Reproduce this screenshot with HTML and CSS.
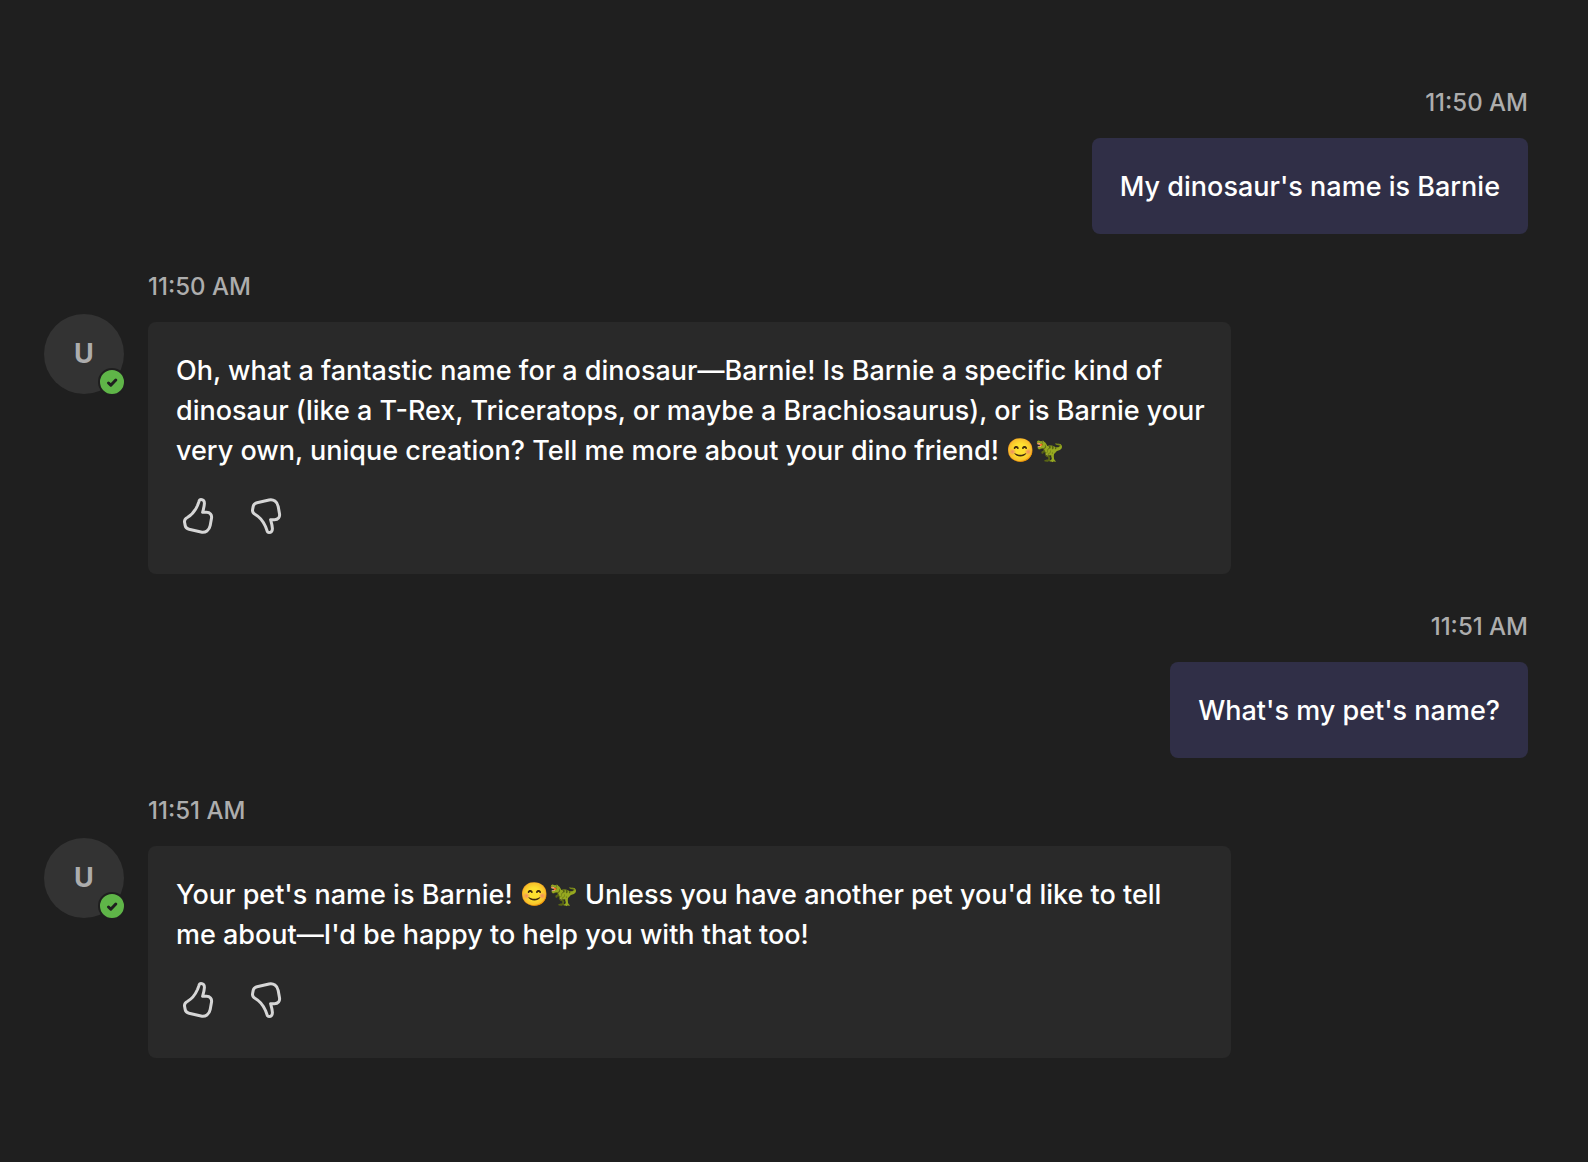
FILE: index.html
```html
<!DOCTYPE html>
<html lang="en">
<head>
<meta charset="utf-8">
<title>Chat</title>
<link rel="stylesheet" href="styles.css">
</head>
<body>
<svg class="sprite" aria-hidden="true">
  <symbol id="thumb" viewBox="0 0 44 44">
    <path d="M25 5.500C27.200 5.500 28.500 7 28.400 9.500C28.300 12.500 27.400 15.500 26.600 18.300H30.500C34 18.300 36.100 20.800 35.500 24.300L34.200 31.500C33.300 36.300 29.500 39 25 38L13 35.200C10.800 34.700 9.600 33.600 9.200 31.600L8.600 28.500C8.100 25.800 9.300 24.500 11.300 23.500C15.800 21 19.500 16 21.500 11.500L22.900 7.700C23.300 6.300 23.800 5.500 25 5.500Z"/>
  </symbol>
</svg>
<main class="chat">
  <article class="message sent">
    <time class="time">11:50 AM</time>
    <div class="bubble"><p class="text">My dinosaur's name is Barnie</p></div>
  </article>
  <article class="message received">
    <time class="time">11:50 AM</time>
    <div class="avatar">U<span class="presence"><svg viewBox="0 0 24 24" aria-label="Available"><path d="M8.500 13L10.800 15.200L15.800 10"/></svg></span></div>
    <div class="bubble">
      <p class="text">Oh, what a fantastic name for a dinosaur—Barnie! Is Barnie a specific kind of dinosaur (like a T-Rex, Triceratops, or maybe a Brachiosaurus), or is Barnie your very own, unique creation? Tell me more about your dino friend! <span class="emoji">😊🦖</span></p>
      <div class="feedback">
        <button type="button" aria-label="Like"><svg><use href="#thumb"/></svg></button>
        <button type="button" class="down" aria-label="Dislike"><svg><use href="#thumb"/></svg></button>
      </div>
    </div>
  </article>
  <article class="message sent">
    <time class="time">11:51 AM</time>
    <div class="bubble"><p class="text">What's my pet's name?</p></div>
  </article>
  <article class="message received">
    <time class="time">11:51 AM</time>
    <div class="avatar">U<span class="presence"><svg viewBox="0 0 24 24" aria-label="Available"><path d="M8.500 13L10.800 15.200L15.800 10"/></svg></span></div>
    <div class="bubble">
      <p class="text">Your pet's name is Barnie! <span class="emoji">😊🦖</span> Unless you have another pet you'd like to tell me about—I'd be happy to help you with that too!</p>
      <div class="feedback">
        <button type="button" aria-label="Like"><svg><use href="#thumb"/></svg></button>
        <button type="button" class="down" aria-label="Dislike"><svg><use href="#thumb"/></svg></button>
      </div>
    </div>
  </article>
</main>
</body>
</html>
```
FILE: styles.css
```css
* { box-sizing: border-box; }
body {
  margin: 0;
  background: #1f1f1f;
  color: #fff;
  font: 500 27px/40px Inter, "Noto Sans", sans-serif;
}
.sprite { display: none; }
.chat {
  display: flex;
  flex-direction: column;
  gap: 36px;
  min-height: 100vh;
  padding: 86px 60px 60px 44px;
}
.message { display: grid; row-gap: 18px; }
.sent { justify-items: end; }
.received {
  grid-template-columns: 80px minmax(0, 1fr);
  column-gap: 24px;
  justify-items: start;
  padding-right: 297px;
}
.time {
  color: #adadad;
  font-size: 24px;
  line-height: 34px;
}
.received .time { grid-column: 2; }
.bubble {
  padding: 29px 28px 27px;
  border-radius: 8px;
  background: #292929;
}
.sent .bubble { background: #302f47; }
.received .bubble {
  width: 100%;
  padding-right: 24px;
  padding-bottom: 36px;
}
.text { margin: 0; }
.emoji {
  font-size: 23px;
  line-height: 1;
  vertical-align: 2px;
}
.avatar {
  position: relative;
  display: flex;
  align-items: center;
  justify-content: center;
  width: 80px;
  height: 80px;
  margin-top: -8px;
  border-radius: 50%;
  background: #333;
  color: #adadad;
  font-weight: 700;
}
.presence {
  position: absolute;
  right: -2px;
  bottom: -2px;
  width: 28px;
  height: 28px;
  border: 2px solid #1f1f1f;
  border-radius: 50%;
  background: #5fb548;
}
.presence svg {
  display: block;
  fill: none;
  stroke: #1f1f1f;
  stroke-width: 3;
  stroke-linecap: round;
  stroke-linejoin: round;
}
.feedback {
  display: flex;
  gap: 24px;
  margin-top: 23px;
}
.feedback button {
  width: 44px;
  height: 44px;
  padding: 0;
  border: 0;
  background: none;
  color: #d6d6d6;
}
.feedback svg {
  display: block;
  width: 44px;
  height: 44px;
  fill: none;
  stroke: currentColor;
  stroke-width: 3;
  stroke-linejoin: round;
}
.feedback .down svg { transform: scaleY(-1); }
```
